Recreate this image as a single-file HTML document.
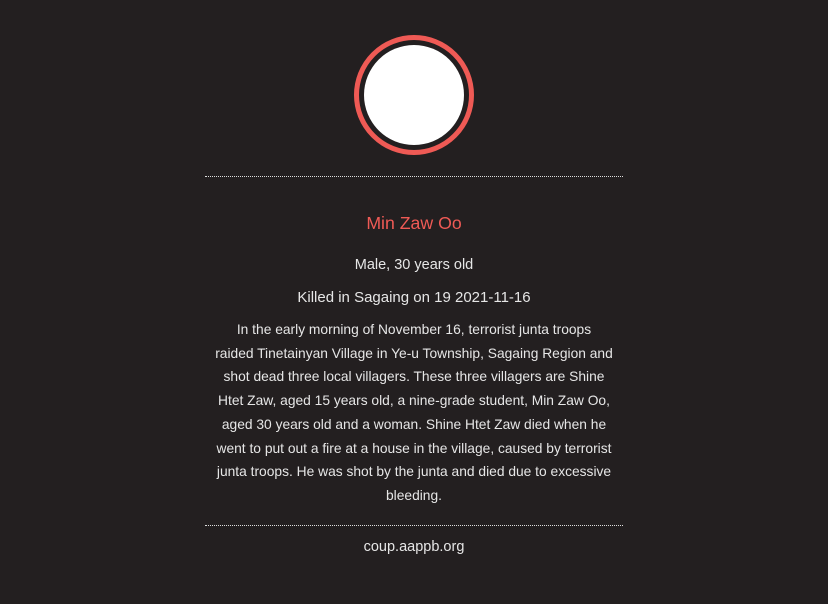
<!DOCTYPE html>
<html><head><meta charset="utf-8"><style>
html,body{margin:0;padding:0;background:#231f20;}
body{width:828px;height:604px;position:relative;font-family:"Liberation Sans",sans-serif;color:#e6e6e6;overflow:hidden}
.ring{position:absolute;left:354px;top:35px;width:110px;height:110px;border:5px solid #ef5a55;border-radius:50%;}
.inner{position:absolute;left:364px;top:45px;width:100px;height:100px;background:#fff;border-radius:50%;}
.hr{position:absolute;left:205px;width:418px;border-top:1px dotted #ddd;}
.c{position:absolute;left:165px;width:498px;text-align:center;white-space:nowrap}
</style></head><body>
<div class="ring"></div><div class="inner"></div>
<div class="hr" style="top:176px"></div>
<div class="c" style="top:213px;font-size:17.7px;color:#ef5a55">Min Zaw Oo</div>
<div class="c" style="top:257px;font-size:14.5px">Male, 30 years old</div>
<div class="c" style="top:289px;font-size:15px">Killed in Sagaing on 19 2021-11-16</div>
<div class="c" style="top:318px;font-size:13.8px;line-height:23.7px">In the early morning of November 16, terrorist junta troops<br>raided Tinetainyan Village in Ye-u Township, Sagaing Region and<br>shot dead three local villagers. These three villagers are Shine<br>Htet Zaw, aged 15 years old, a nine-grade student, Min Zaw Oo,<br>aged 30 years old and a woman. Shine Htet Zaw died when he<br>went to put out a fire at a house in the village, caused by terrorist<br>junta troops. He was shot by the junta and died due to excessive<br>bleeding.</div>
<div class="hr" style="top:525px"></div>
<div class="c" style="top:539px;font-size:14.5px">coup.aappb.org</div>
</body></html>
